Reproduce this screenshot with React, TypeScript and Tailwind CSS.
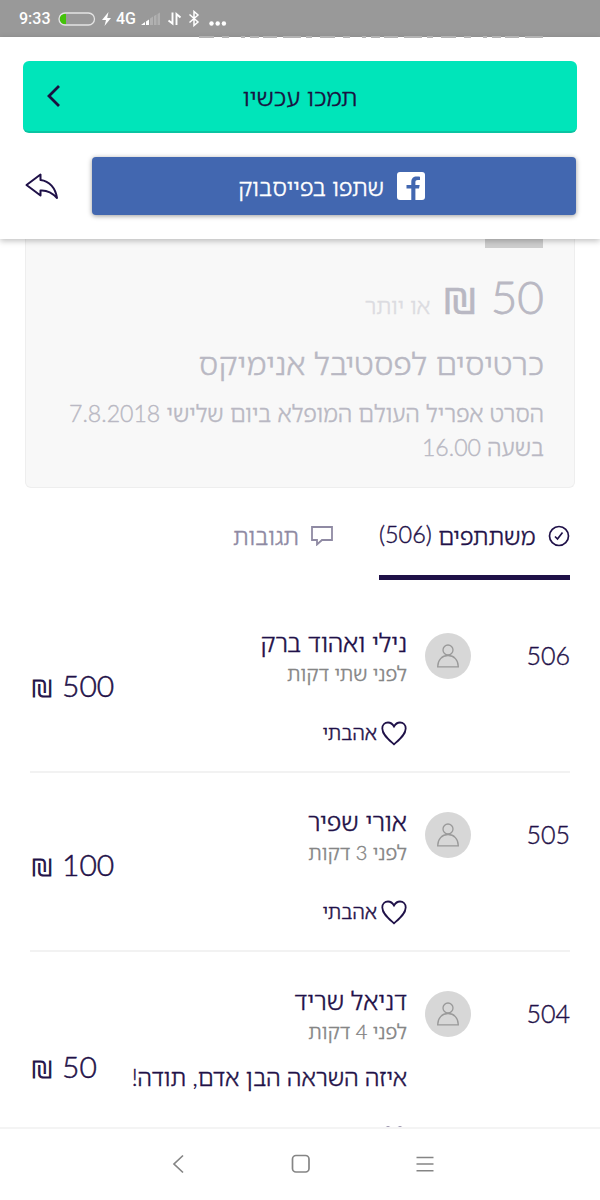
import React from 'react';

type Backer = {
  place: number;
  name: string;
  time: string;
  amount: number;
  comment?: string;
};

const backers: Backer[] = [
  { place: 506, name: 'נילי ואהוד ברק', time: 'לפני שתי דקות', amount: 500 },
  { place: 505, name: 'אורי שפיר', time: 'לפני 3 דקות', amount: 100 },
  { place: 504, name: 'דניאל שריד', time: 'לפני 4 דקות', amount: 50, comment: 'איזה השראה הבן אדם, תודה!' },
];

function StatusBar() {
  return (
    <div
      dir="ltr"
      className="relative flex h-[37px] shrink-0 items-center bg-[#999] pl-[19px] text-white [-webkit-text-stroke:0]"
    >
      <span className="w-[39px] font-['Roboto',sans-serif] text-[16px] leading-none font-medium">9:33</span>
      <svg width="38" height="14" viewBox="0 0 38 14" fill="none">
        <path d="M7 1.500h1v11H7a5.500 5.500 0 0 1 0-11Z" fill="#43c20a" />
        <rect x="1" y="1" width="35.500" height="12" rx="6" stroke="#e4e4e4" strokeWidth="1.300" />
      </svg>
      <svg className="ml-[6px]" width="10" height="16" viewBox="0 0 10 16" fill="#fff">
        <path d="M6.500 1 0 9h4L2.500 15 9 7H5.200Z" />
      </svg>
      <span className="ml-1 w-[24px] font-['Roboto',sans-serif] text-[16px] leading-none font-medium">4G</span>
      <svg className="ml-[1px]" width="20" height="14" viewBox="0 0 20 14">
        <path d="M0 13l4-3v3zM5 13V9.500L8 7.500V13z" fill="#fff" />
        <path d="M9 13V6.500L12 4.500V13zM13 13V4L15.500 2.500V13zM16.500 13V2L19 .5V13z" fill="#b0b0b0" />
      </svg>
      <svg className="ml-[6px]" width="15" height="16" viewBox="0 0 15 16" fill="none" stroke="#fff" strokeWidth="1.900">
        <path d="M5.500 1.500v11L1.500 9.500M9.500 14V3l4 3.500" />
      </svg>
      <svg className="ml-[6px]" width="12" height="17" viewBox="0 0 12 17" fill="none" stroke="#fff" strokeWidth="1.500">
        <path d="m1.500 4.500 8.500 7.500-4 3.500v-14L10 5l-8.500 7.500" />
      </svg>
      <svg className="mt-[9px] ml-[9px]" width="18" height="5" viewBox="0 0 18 5" fill="#fff">
        <circle cx="2.500" cy="2.500" r="2.200" />
        <circle cx="8.700" cy="2.500" r="2.200" />
        <circle cx="14.900" cy="2.500" r="2.200" />
      </svg>
      {/* tail of the page line that scrolled under the bar */}
      <svg className="absolute top-[36px] left-[199px] z-20" width="344" height="2">
        <path d="M0 1h344" stroke="#b4b4b4" strokeWidth="2" strokeDasharray="15 8 7 12 4 5 9 4 14 6 18 5 6 8" />
      </svg>
    </div>
  );
}

function ActionBar() {
  return (
    <header className="relative z-10 h-[202px] shrink-0 bg-white px-[23px] pt-[24px] shadow-[0_2px_6px_rgba(0,0,0,0.25)]">
      <button className="flex h-[72px] w-[554px] items-center rounded-[6px] border-b-2 border-[#0ac4a2] bg-[#00e5ba] pr-[39px] text-[#1a1040]">
        <span className="flex-1 pt-[2px] text-[24.500px] leading-none">תמכו עכשיו</span>
        <svg className="ml-[23px]" width="16" height="24" viewBox="0 0 16 24" fill="none" stroke="currentColor" strokeWidth="2.800">
          <path d="M13 2 3 12l10 10" />
        </svg>
      </button>
      <div className="mt-[24px] flex items-center justify-between">
        <button className="mr-[1px] flex h-[58px] w-[484px] items-center justify-center gap-[13px] rounded-[4px] bg-[#4267b0] pr-[5px] text-[23.400px] leading-none text-white shadow-[0_1px_5px_rgba(0,0,0,0.4)]">
          <svg width="28" height="28" viewBox="0 0 28 28">
            <rect width="28" height="28" rx="3" fill="#fff" />
            <path
              d="M14.300 28V16.500H9.500V13h4.800V10c0-3.700 2.200-5.500 5.300-5.500 1.500 0 2.500.1 3.400.2v3.200h-2.200c-1.700 0-2.400.9-2.400 2.300V13h4.300l-.7 3.500h-3.600V28Z"
              fill="#4267b0"
            />
          </svg>
          <span className="pt-[3px]">שתפו בפייסבוק</span>
        </button>
        <svg className="ml-[2px]" width="34" height="28" viewBox="0 0 34 28" fill="none" stroke="#1f1148" strokeWidth="2" strokeLinejoin="round">
          <path d="M1.500 13 15.500 2.500v5.500C24.500 9 30.500 16 32 26 27 20.500 22 18 15.500 18.500v5Z" />
        </svg>
      </div>
    </header>
  );
}

function Reward() {
  return (
    <section className="mx-[25px] h-[249px] shrink-0 rounded-b-[6px] border border-t-0 border-[#eee] bg-[#f8f8f8] px-[31px] text-[#b9b8c3]">
      <div className="h-[9px] w-[58px] bg-[#cecece]" />
      <div className="-mr-px mt-[24px] flex items-baseline leading-[50px]">
        <span className="text-[46px] [-webkit-text-stroke:0.8px]">50</span>
        <span className="mr-[12px] text-[44px] font-normal">₪</span>
        <span className="mr-[11px] text-[22.500px] text-[#dcdce1]">או יותר</span>
      </div>
      <h2 className="-mr-px mt-[12px] text-[31.400px] leading-[40px]">כרטיסים לפסטיבל אנימיקס</h2>
      <p className="-mr-px mt-[13px] text-[23.100px] leading-[34px] whitespace-nowrap">
        הסרט אפריל העולם המופלא ביום שלישי 7.8.2018
        <br />
        בשעה 16.00
      </p>
    </section>
  );
}

function Tabs() {
  return (
    <nav className="flex h-[106px] shrink-0 px-[30px] pt-[25px] text-[23.400px] leading-[46px]">
      <div className="flex h-[67px] w-[191px] items-start justify-between border-b-[5px] border-[#1f1148] whitespace-nowrap text-[#1f1148]">
        <svg className="mt-[12px]" width="22" height="22" viewBox="0 0 22 22" fill="none" stroke="currentColor" strokeWidth="1.700">
          <circle cx="11" cy="11" r="9.500" />
          <path d="m7 11.500 2.500 2.500L14.500 7.500" />
        </svg>
        <span>
          משתתפים <span className="relative -top-[2px]">(506)</span>
        </span>
      </div>
      <div className="mr-[46px] flex items-start gap-[12px] text-[#8f8aa3]">
        <svg className="mt-[13px]" width="22" height="20" viewBox="0 0 22 20" fill="none" stroke="currentColor" strokeWidth="1.800">
          <path d="M1 1h20v13H11l-5 4.500V14H1Z" />
        </svg>
        <span>תגובות</span>
      </div>
    </nav>
  );
}

function Like() {
  return (
    <div className="flex items-center gap-[4px] text-[20px] leading-[26px]">
      <svg width="26" height="25" viewBox="0 0 26 25" fill="none" stroke="currentColor" strokeWidth="1.800">
        <path d="M13 23.300C8 18.800 1.300 13.800 1.300 7.500 1.300 4 3.800 1.500 7 1.500c2.700 0 4.600 1.500 6 4 1.400-2.500 3.300-4 6-4 3.200 0 5.700 2.500 5.700 6 0 6.300-6.700 11.300-11.700 15.800Z" />
      </svg>
      <span className="-mt-[3px]">אהבתי</span>
    </div>
  );
}

function BackerRow({ place, name, time, amount, comment }: Backer) {
  return (
    <li className="flex items-center border-b-2 border-[#f2f2f2] pt-[34px] pb-[25px] text-[#1f1148]">
      <span className="mt-[4px] w-[99px] self-start text-[25px] leading-[46px]">{place}</span>
      <div className="mt-[5px] flex size-[46px] items-center justify-center self-start rounded-full bg-[#d7d7d7]">
        <svg width="22" height="24" viewBox="0 0 22 24" fill="none" stroke="#999" strokeWidth="1.300">
          <circle cx="11" cy="6" r="5" />
          <path d="M.7 22.800C.7 16 5 11.500 11 11.500S21.300 16 21.300 22.800Z" />
        </svg>
      </div>
      <div className="mr-[18px] flex-1 whitespace-nowrap">
        <h3 className="text-[24.700px] leading-[30px]">{name}</h3>
        <p className="pt-px text-[20px] leading-[28px] text-[#858585]">{time}</p>
        {comment && <p className="mt-[14px] mb-[-4px] text-[23.400px] leading-[37px]">{comment}</p>}
        <div className="mt-[34px]">
          <Like />
        </div>
      </div>
      <div
        dir="ltr"
        className="mb-[4px] flex items-baseline justify-start gap-[8px] text-[30px] leading-[36px] [-webkit-text-stroke:0.5px]"
      >
        <span className="text-[29px] [-webkit-text-stroke:0.9px]">₪</span>
        <span>{amount}</span>
      </div>
    </li>
  );
}

function NavigationBar() {
  return (
    <div dir="ltr" className="flex h-[73px] shrink-0 items-center border-t-2 border-[#f4f4f4] bg-white pb-[2px] pl-[172px]">
      <svg width="12" height="20" viewBox="0 0 12 20" fill="none" stroke="#858585" strokeWidth="1.700">
        <path d="M11 1.500 2 10l9 8.500" />
      </svg>
      <svg className="ml-[107px]" width="20" height="20" viewBox="0 0 20 20" fill="none" stroke="#858585" strokeWidth="1.700">
        <rect x="1.500" y="1.500" width="16.500" height="16.500" rx="3.500" />
      </svg>
      <svg className="ml-[105px]" width="18" height="18" viewBox="0 0 18 18" stroke="#858585" strokeWidth="1.600">
        <path d="M.5 2.500h17M.5 9h17M.5 15.700h17" />
      </svg>
    </div>
  );
}

export default function App() {
  return (
    <div
      dir="rtl"
      className="flex h-[1200px] w-[600px] flex-col overflow-hidden bg-white font-['Lato','Noto_Sans_Hebrew','Open_Sans',sans-serif] font-light [-webkit-text-stroke:0.4px]"
    >
      <StatusBar />
      <ActionBar />
      <main className="flex min-h-0 flex-1 flex-col overflow-hidden">
        <Reward />
        <Tabs />
        <ul className="shrink-0 px-[30px]">
          {backers.map((backer) => (
            <BackerRow key={backer.place} {...backer} />
          ))}
        </ul>
      </main>
      <NavigationBar />
    </div>
  );
}
